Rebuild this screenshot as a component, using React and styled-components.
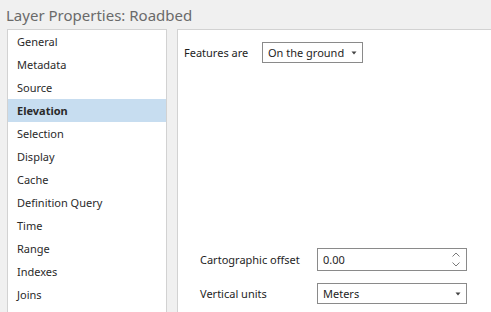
import React from "react";
import styled, { createGlobalStyle } from "styled-components";

const Global = createGlobalStyle`
  html, body { margin: 0; padding: 0; background: #f0f0f0; }
  body { font-family: "Noto Sans", "Open Sans", sans-serif; color: #262626; }
`;

const Page = styled.div`
  width: 491px;
  height: 312px;
  overflow: hidden;
  background: #f0f0f0;
  display: flex;
  flex-direction: column;
`;

const Title = styled.h1`
  margin: 0;
  height: 29px;
  padding-left: 6px;
  font-size: 15px;
  font-weight: 400;
  line-height: 30px;
  color: #6a6a6a;
  white-space: nowrap;
`;

const Body = styled.div`
  display: flex;
  gap: 10px;
  padding-left: 7px;
  flex: 1;
`;

const Panel = styled.div`
  background: #fff;
  border: 1px solid #d2d2d2;
  height: 320px;
  box-sizing: border-box;
`;

const NavPanel = styled(Panel)`
  width: 160px;
  flex: none;
`;

const ContentPanel = styled(Panel)`
  width: 340px;
  flex: none;
  padding: 12px 6px;
  display: flex;
  flex-direction: column;
`;

const NavList = styled.ul`
  list-style: none;
  margin: 0;
  padding: 0;
`;

const NavItem = styled.li`
  height: 23px;
  line-height: 23px;
  padding-left: 9px;
  font-size: 11px;
  font-weight: ${(p) => (p.$active ? 700 : 400)};
  background: ${(p) => (p.$active ? "#c7ddf0" : "transparent")};
  color: #2a2a2a;
  white-space: nowrap;
`;

const Row = styled.div`
  display: flex;
  align-items: center;
`;

const Label = styled.span`
  font-size: 11px;
  color: #1e1e1e;
  width: ${(p) => p.$w}px;
  flex: none;
  white-space: nowrap;
`;

const Box = styled.div`
  box-sizing: border-box;
  width: ${(p) => p.$w}px;
  height: ${(p) => p.$h}px;
  border: 1px solid #8a8a8a;
  background: #fff;
  display: flex;
  align-items: center;
  justify-content: space-between;
  padding: 0 5px 0 5px;
  font-size: 11px;
  color: #1e1e1e;
  white-space: nowrap;
`;

const Arrow = () => (
  <svg width="6" height="4" viewBox="0 0 6 4">
    <path d="M0.5 0.5 L5.5 0.5 L3 3.5 Z" fill="#444" />
  </svg>
);

const Spinner = styled.div`
  display: flex;
  flex-direction: column;
  gap: 5px;
  margin-right: 1px;
`;

const Chevron = ({ up }) => (
  <svg width="8" height="5" viewBox="0 0 8 5">
    <path
      d={up ? "M0.5 4.5 L4 1 L7.5 4.5" : "M0.5 0.5 L4 4 L7.5 0.5"}
      fill="none"
      stroke="#7a7a7a"
      strokeWidth="1"
    />
  </svg>
);

const Bottom = styled.div`
  margin-top: 185px;
  padding-left: 16px;
  display: flex;
  flex-direction: column;
  gap: 12px;
`;

const items = [
  "General",
  "Metadata",
  "Source",
  "Elevation",
  "Selection",
  "Display",
  "Cache",
  "Definition Query",
  "Time",
  "Range",
  "Indexes",
  "Joins",
];

export default function App() {
  return (
    <Page>
      <Global />
      <Title>Layer Properties: Roadbed</Title>
      <Body>
        <NavPanel>
          <NavList>
            {items.map((it) => (
              <NavItem key={it} $active={it === "Elevation"}>
                {it}
              </NavItem>
            ))}
          </NavList>
        </NavPanel>
        <ContentPanel>
          <Row>
            <Label $w={78}>Features are</Label>
            <Box $w={101} $h={21}>
              <span>On the ground</span>
              <Arrow />
            </Box>
          </Row>
          <Bottom>
            <Row>
              <Label $w={117}>Cartographic offset</Label>
              <Box $w={150} $h={23}>
                <span>0.00</span>
                <Spinner>
                  <Chevron up />
                  <Chevron />
                </Spinner>
              </Box>
            </Row>
            <Row>
              <Label $w={117}>Vertical units</Label>
              <Box $w={150} $h={21}>
                <span>Meters</span>
                <Arrow />
              </Box>
            </Row>
          </Bottom>
        </ContentPanel>
      </Body>
    </Page>
  );
}
